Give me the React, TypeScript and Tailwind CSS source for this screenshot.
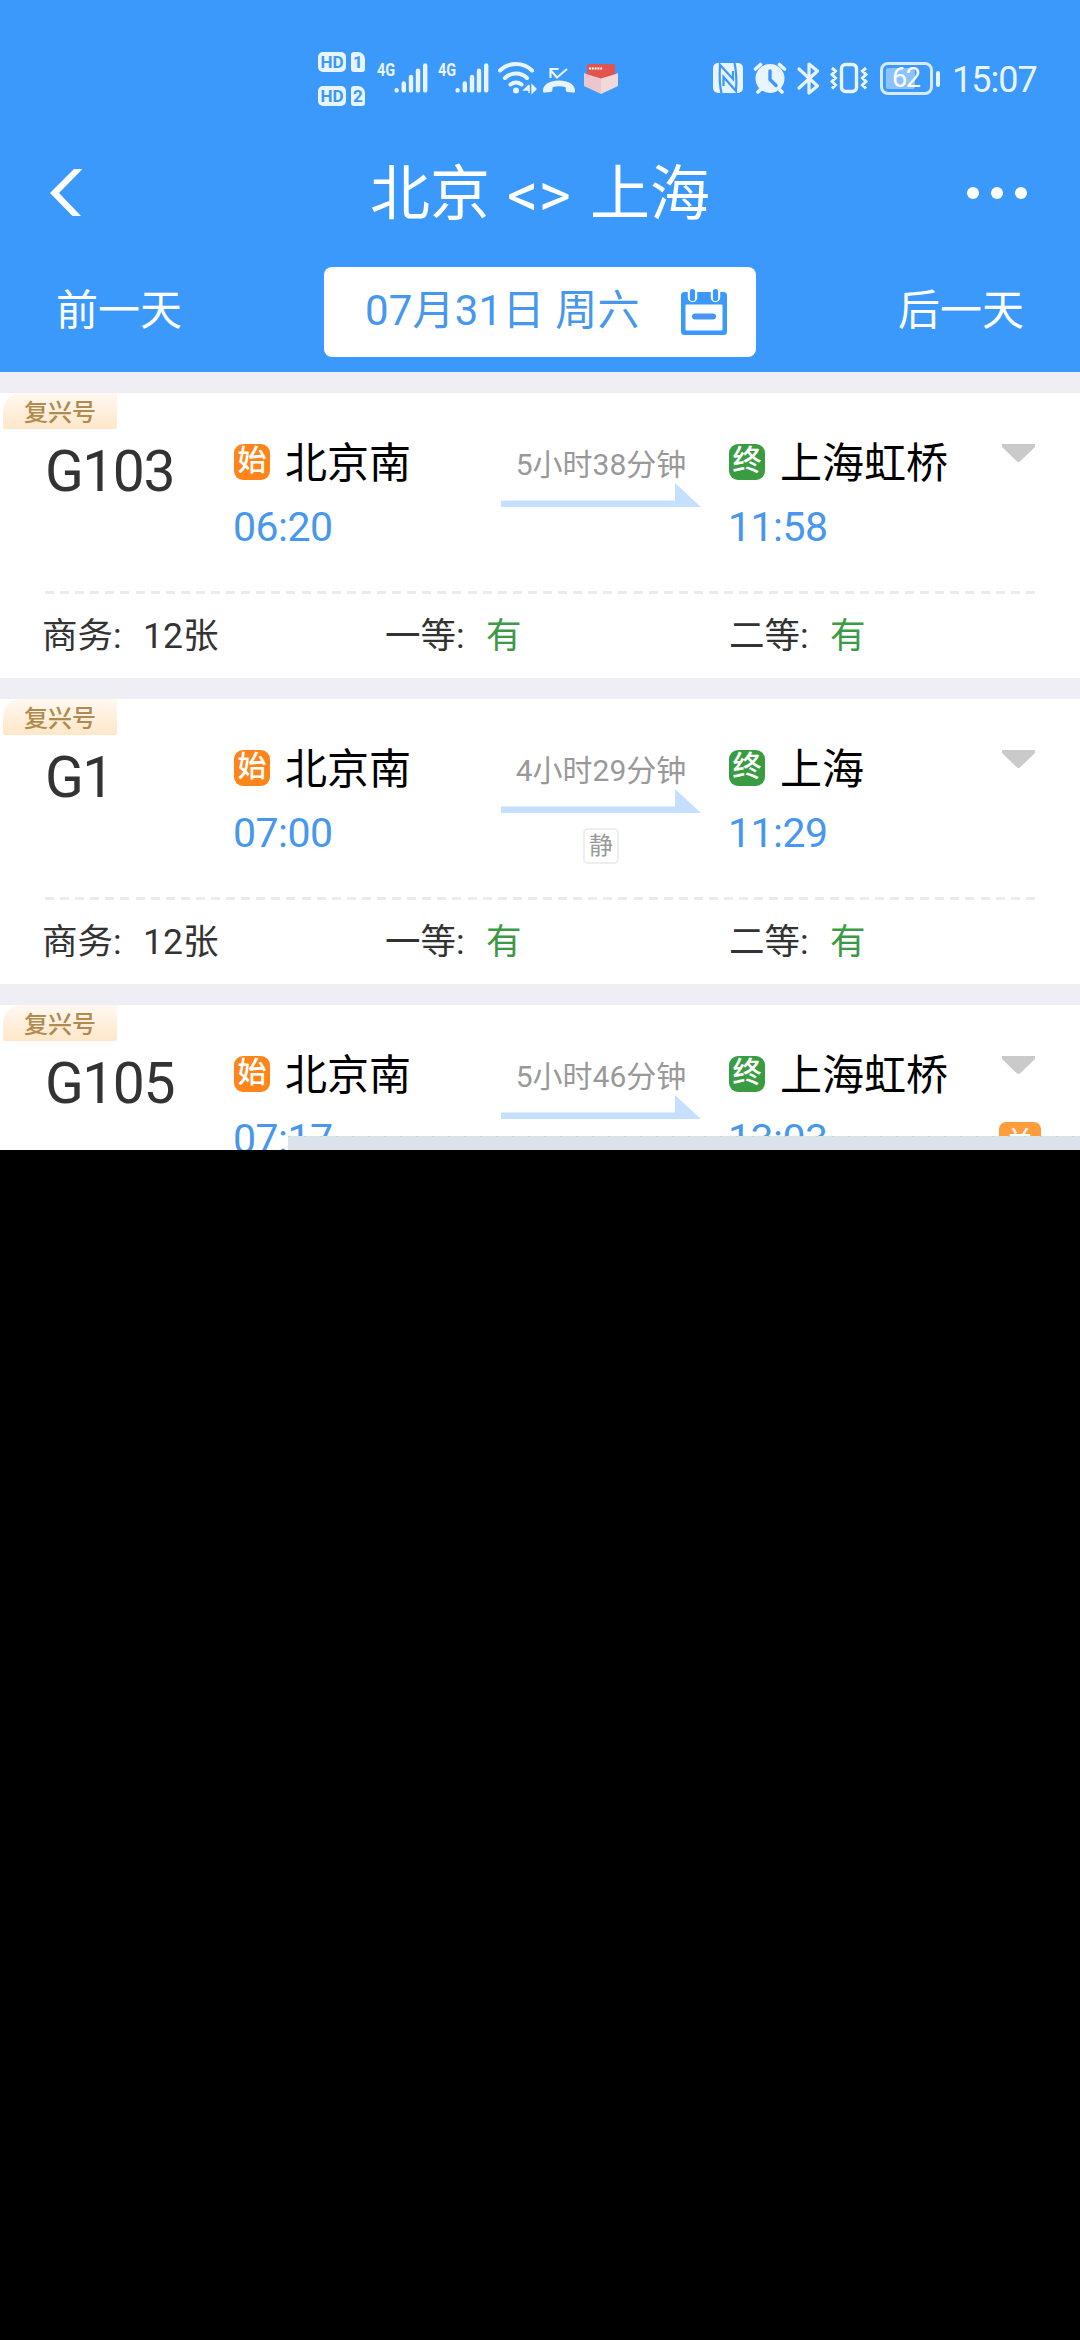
import type { ReactNode } from "react";

const FONT = "font-['Roboto','Noto_Sans_CJK_SC',sans-serif]";

interface Train {
  code: string;
  from: string;
  to: string;
  depart: string;
  arrive: string;
  duration: string;
  quiet?: boolean;
  exchange?: boolean;
}

const trains: Train[] = [
  { code: "G103", from: "北京南", to: "上海虹桥", depart: "06:20", arrive: "11:58", duration: "5小时38分钟" },
  { code: "G1", from: "北京南", to: "上海", depart: "07:00", arrive: "11:29", duration: "4小时29分钟", quiet: true },
  { code: "G105", from: "北京南", to: "上海虹桥", depart: "07:17", arrive: "13:03", duration: "5小时46分钟", exchange: true },
];

function SimTag({ n }: { n: string }) {
  return (
    <div className="flex h-5 items-center gap-[5px] leading-none text-[#3b99fc]">
      <span className="grid h-5 w-7 place-items-center rounded-[5px] bg-[#e8f4ff] text-[17px] font-bold">HD</span>
      <span className="grid h-5 w-[14px] place-items-center rounded-[3px] rounded-tr-[7px] bg-[#e8f4ff] text-[17px] font-bold">
        {n}
      </span>
    </div>
  );
}

function Signal() {
  return (
    <div className="flex h-8 w-[51px] items-start text-[#e8f4ff]">
      <span className="w-[17px] origin-left scale-x-[0.76] text-[19px] leading-[15px] font-bold">4G</span>
      <svg className="h-8 w-[34px]" viewBox="0 0 34 32" stroke="currentColor" strokeWidth="4.4" strokeLinecap="round">
        <path d="M2.6 28.2v.2M9.8 21.4v7M17 15v13.4M24 8.8v19.6M31.2 3.4v25" />
      </svg>
    </div>
  );
}

function StatusIcons() {
  return (
    <svg className="h-10 w-[128px]" viewBox="496 58 128 40" fill="none" stroke="#e8f4ff">
      <g strokeWidth="4" strokeLinecap="round">
        <path d="M500 70.5a23 23 0 0 1 32 0M505 78a16 16 0 0 1 22 0M510.5 84.5a9 9 0 0 1 11 0" />
        <circle cx="516" cy="90.5" r="3" fill="#e8f4ff" stroke="none" />
      </g>
      <path d="M529 85v8M529 85l-5 5h6M532 85v8l4-4z" fill="#e8f4ff" strokeWidth="1.4" />
      <path d="M567 69l-10 8.5-6.5-7.5M550.5 78v-9h8" strokeWidth="2.2" />
      <path
        d="M543 91.5c-.5-6 5-11 16-11s16.5 5 16 11c0 1-1 1.3-2 1.1l-5.5-.6c-1.5-.2-1.6-1-1.7-2.2l-.2-2.6c-4-1.4-9-1.4-13 0l-.2 2.6c-.1 1.2-.4 2-1.9 2.2l-5.5.6c-1 .2-2-.1-2-1.1z"
        fill="#e8f4ff"
        stroke="none"
      />
      <g stroke="none">
        <rect x="587" y="64" width="28" height="16" rx="2" fill="#e4544f" />
        <path d="M584 73l3 1.2 14 4.3V94l-17-8z" fill="#ebc6cc" />
        <path d="M618 73l-3 1.2-14 4.3V94l17-8z" fill="#f1d8db" />
        <path d="M589 68.5h14" stroke="#fff" strokeWidth="1.8" strokeDasharray="2 .8" />
      </g>
    </svg>
  );
}

function DeviceIcons() {
  return (
    <svg className="h-10 w-[158px]" viewBox="712 58 158 40" fill="none" stroke="#e8f4ff">
      <rect x="713" y="63" width="30" height="30" rx="5" fill="#e8f4ff" stroke="none" />
      <path d="M721.5 93c-2-8-2-20-1.5-28L733 79v-8M734.5 63c2 8 2 20 1.5 28L723.5 77v9" stroke="#3b99fc" strokeWidth="2.2" />
      <circle cx="770" cy="78.5" r="14.5" fill="#e8f4ff" stroke="none" />
      <path d="M770 71v8.5l6 6" stroke="#3b99fc" strokeWidth="3.4" strokeLinecap="round" />
      <path d="M755.5 69l5-4.5M784.5 69l-5-4.5M758 92l3-3M782 92l-3-3" strokeWidth="3.6" strokeLinecap="round" />
      <path d="M799 69l18.5 17-8.5 7V64l8.5 7L799 88" strokeWidth="3.2" strokeLinejoin="round" strokeLinecap="round" />
      <rect x="841.5" y="64.5" width="15" height="27" rx="4" strokeWidth="3.4" />
      <path
        d="M832 68l3.5 3-3.5 3.5 3.5 3.5-3.5 3.5 3.5 3.5-3.5 3.5M866 68l-3.5 3 3.5 3.5-3.5 3.5 3.5 3.5-3.5 3.5 3.5 3.5"
        strokeWidth="3"
      />
    </svg>
  );
}

function StatusBar() {
  return (
    <div className="flex h-[156px] items-start pt-[50px] pl-[318px]">
      <div className="flex w-[59px] flex-col gap-[14px] pt-[2px]">
        <SimTag n="1" />
        <SimTag n="2" />
      </div>
      <div className="flex gap-[10px] pt-[12px]">
        <Signal />
        <Signal />
      </div>
      <div className="ml-[7px] flex pt-[8px]">
        <StatusIcons />
        <div className="w-[88px]" />
        <DeviceIcons />
      </div>
      <div className="ml-[10px] flex items-center pt-[12px]">
        <div className="flex h-[33px] w-[53px] rounded-[8px] border-[3px] border-[#d5eaff] p-[3px]">
          <div className="flex w-[29px] items-center rounded-[2px] bg-[#8cc3ff] pl-[6px] text-[27px] leading-none tracking-[-1.5px] text-white">
            62
          </div>
        </div>
        <div className="ml-[3px] h-4 w-1 rounded-sm bg-[#e8f4ff]" />
      </div>
      <div className="ml-[12px] pt-[10px] text-[36px] leading-[40px] tracking-[-1px] text-[#e8f4ff]">15:07</div>
    </div>
  );
}

function CalendarIcon() {
  return (
    <svg className="h-12 w-[46px]" viewBox="0 0 46 48">
      <rect y="4" width="46" height="43" rx="3.5" fill="#3b99fc" />
      <rect x="4.5" y="16.5" width="37" height="26" rx="1" fill="#fff" />
      <path d="M11.5 0v9.5M34.5 0v9.5" stroke="#fff" strokeWidth="9.5" strokeLinecap="round" />
      <path d="M11.5 3.5v7M34.5 3.5v7" stroke="#3b99fc" strokeWidth="5.2" strokeLinecap="round" />
      <path d="M14 28.5h18" stroke="#4797ee" strokeWidth="6" strokeLinecap="round" />
    </svg>
  );
}

function Header() {
  return (
    <header className="h-[372px] bg-[#3b99fc] text-white">
      <StatusBar />
      <div className="flex h-[74px] items-center pl-[50px]">
        <svg className="h-12 w-8" viewBox="0 0 32 48" fill="#fff">
          <path d="M24 0h8.5L9 24l22 23h-8.5L0 24z" />
        </svg>
        <h1 className="ml-[288px] flex w-[340px] items-center pt-[4px] text-[60px] leading-[74px] font-normal whitespace-nowrap">
          <span>北京</span>
          <span className="w-[101px] pr-[2px] text-center text-[62px]">&lt;&gt;</span>
          <span>上海</span>
        </h1>
        <div className="ml-[257px] flex gap-3">
          <i className="h-3 w-3 rounded-full bg-white" />
          <i className="h-3 w-3 rounded-full bg-white" />
          <i className="h-3 w-3 rounded-full bg-white" />
        </div>
      </div>
      <div className="mt-[37px] flex h-[90px] items-center justify-between px-14 text-[42px]">
        <button type="button" className="w-[126px] pb-[3px] whitespace-nowrap">前一天</button>
        <button
          type="button"
          className="flex h-[90px] w-[432px] items-center rounded-[8px] bg-white pl-[41px] text-[#4797ee]"
        >
          <span className="w-[276px] pb-[3px] text-left tracking-[0.2px] whitespace-nowrap">07月31日 周六</span>
          <span className="ml-[40px]">
            <CalendarIcon />
          </span>
        </button>
        <button type="button" className="w-[126px] pb-[3px] whitespace-nowrap">后一天</button>
      </div>
    </header>
  );
}

function StationMark({ className, children }: { className: string; children: ReactNode }) {
  return (
    <span className={`grid h-9 w-9 place-items-center rounded-[9px] pb-px text-[29px] leading-none font-medium text-white ${className}`}>
      {children}
    </span>
  );
}

function Stop({ mark, markClass, name, time }: { mark: string; markClass: string; name: string; time: string }) {
  return (
    <div className="pt-[45px]">
      <div className="flex h-[48px] items-center gap-[15px] whitespace-nowrap">
        <StationMark className={markClass}>{mark}</StationMark>
        <span className="pt-[3px] text-[42px] leading-[48px] text-black">{name}</span>
      </div>
      <div className="-ml-px mt-[17px] text-[41px] leading-[48px] tracking-[-0.5px] text-[#4797ee]">{time}</div>
    </div>
  );
}

function Seat({ label, value, available }: { label: string; value: string; available?: boolean }) {
  return (
    <div className="flex text-[35.5px] leading-[49px] text-[#333]">
      <span className="w-[101px]">{label}:</span>
      <span className={available ? "text-[#3c9a45]" : undefined}>{value}</span>
    </div>
  );
}

function TrainCard({ train }: { train: Train }) {
  return (
    <section className="relative h-[285px] shrink-0 bg-white">
      <div className="absolute top-0 left-[3px] h-9 w-[114px] rounded-[2px] rounded-tl-[18px] bg-linear-to-b from-[#fff8f2] to-[#ffe7c8] pt-[2px] text-center text-[24px] leading-[36px] font-medium text-[#b08b50]">
        复兴号
      </div>
      <div className="grid h-[198px] grid-cols-[234px_267px_228px_270px_81px]">
        <div className="pt-[45px] pl-[45px] text-[57px] leading-[68px] tracking-[-1.5px] text-[#333]">{train.code}</div>
        <Stop mark="始" markClass="bg-[#ff851b]" name={train.from} time={train.depart} />
        <div className="w-[200px] pt-[51px]">
          <div className="h-[39px] text-center text-[30px] leading-[41px] whitespace-nowrap text-[#999]">{train.duration}</div>
          <svg className="h-6 w-[200px]" viewBox="0 0 200 24" fill="#c5e0ff">
            <path d="M0 17.5h174V0l26 24H0z" />
          </svg>
          {train.quiet && (
            <div className="mx-auto mt-[15px] grid h-9 w-9 place-items-center rounded-[5px] border-2 border-[#eee] text-[24px] leading-none text-[#999]">
              静
            </div>
          )}
        </div>
        <Stop mark="终" markClass="bg-[#3a9c41]" name={train.to} time={train.arrive} />
        <div className="flex flex-col pt-[51px]">
          <svg className="ml-[3px] h-[18px] w-[33px]" viewBox="0 0 33 18" fill="#cacaca">
            <path d="M0 0h33v3L18.5 17q-2 2-4 0L0 3z" />
          </svg>
          {train.exchange && (
            <div className="mt-[48px] grid h-[42px] w-[42px] place-items-center rounded-[7px] bg-[#ff9d3c] text-[30px] leading-none text-white">
              兑
            </div>
          )}
        </div>
      </div>
      <div className="mx-[45px] h-[3px] bg-[repeating-linear-gradient(90deg,#ebebeb_0_9px,transparent_9px_15.09px)]" />
      <div className="grid grid-cols-[343px_344px_1fr] pt-[18px] pl-[42px]">
        <Seat label="商务" value="12张" />
        <Seat label="一等" value="有" available />
        <Seat label="二等" value="有" available />
      </div>
    </section>
  );
}

export default function App() {
  return (
    <main className={`h-[2340px] w-[1080px] overflow-hidden bg-black ${FONT}`}>
      <div className="relative h-[1150px] overflow-hidden bg-[#eeeef4]">
        <Header />
        <div className="mt-[21px] flex flex-col gap-[21px]">
          {trains.map((train) => (
            <TrainCard key={train.code} train={train} />
          ))}
        </div>
        <div className="absolute bottom-0 left-[288px] h-[14px] w-[792px] bg-[#dde1eb]">
          <div className="h-px bg-[repeating-linear-gradient(90deg,#9dfb9a_0_2px,transparent_2px_16px)]" />
        </div>
      </div>
    </main>
  );
}
